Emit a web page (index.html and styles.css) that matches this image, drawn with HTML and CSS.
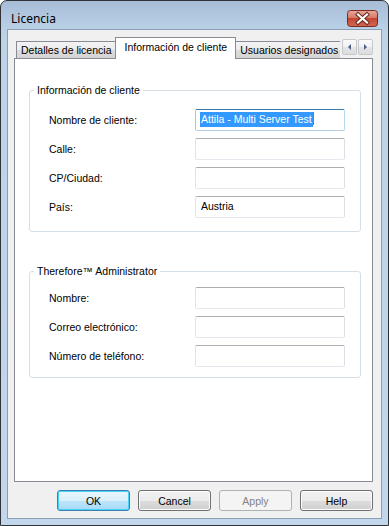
FILE: index.html
```html
<!DOCTYPE html>
<html lang="es">
<head>
    <meta charset="UTF-8">
    <title>Licencia</title>
    <link rel="stylesheet" href="styles.css">
</head>
<body>
    <div class="window">
        <div class="titlebar">
            <span class="title">Licencia</span>
            <svg class="close" width="31" height="17" viewBox="0 0 31 17">
                <defs>
                    <linearGradient id="red" x1="0" y1="0" x2="0" y2="1">
                        <stop offset="0" stop-color="#eaa99a"/>
                        <stop offset="0.45" stop-color="#d77a69"/>
                        <stop offset="0.5" stop-color="#c44531"/>
                        <stop offset="1" stop-color="#cf6a54"/>
                    </linearGradient>
                </defs>
                <rect x="0.5" y="0.5" width="30" height="16" rx="3" fill="url(#red)" stroke="#7a2a20"/>
                <path d="M11 4.5 L20 12.5 M20 4.5 L11 12.5" stroke="#6b2a22" stroke-width="4.2" stroke-linecap="square"/>
                <path d="M11 4.5 L20 12.5 M20 4.5 L11 12.5" stroke="#fff" stroke-width="2.2" stroke-linecap="square"/>
            </svg>
        </div>
        <div class="client">
            <div class="tabstrip">
                <div class="tabs">
                    <div class="tab">Detalles de licencia</div>
                    <div class="tab selected">Información de cliente</div>
                    <div class="tab">Usuarios designados</div>
                </div>
                <div class="spin">
                    <div class="spin_btn"><span class="arrow left"></span></div>
                    <div class="spin_btn"><span class="arrow right"></span></div>
                </div>
            </div>
            <div class="panel">
                <fieldset class="group first">
                    <legend>Información de cliente</legend>
                    <div class="rows">
                        <label>Nombre de cliente:</label>
                        <div class="field focused"><span class="sel">Attila - Multi Server Test</span><span class="caret"></span></div>
                        <label>Calle:</label>
                        <div class="field"></div>
                        <label>CP/Ciudad:</label>
                        <div class="field"></div>
                        <label>País:</label>
                        <div class="field">Austria</div>
                    </div>
                </fieldset>
                <fieldset class="group second">
                    <legend>Therefore™ Administrator</legend>
                    <div class="rows">
                        <label>Nombre:</label>
                        <div class="field"></div>
                        <label>Correo electrónico:</label>
                        <div class="field"></div>
                        <label>Número de teléfono:</label>
                        <div class="field"></div>
                    </div>
                </fieldset>
            </div>
            <div class="buttons">
                <button class="btn default">OK</button>
                <button class="btn">Cancel</button>
                <button class="btn disabled">Apply</button>
                <button class="btn">Help</button>
            </div>
        </div>
    </div>
</body>
</html>
```

FILE: styles.css
```css
* {margin: 0; padding: 0; box-sizing: border-box;}

body
{
    background: #ffffff;
    font-family: "Liberation Sans", Arial, sans-serif;
    font-size: 10.5px;
    color: #000;
}

.window
{
    width: 389px;
    height: 526px;
    border: 1px solid #2f3338;
    border-radius: 7px 7px 0 0;
    background: linear-gradient(#a7bdd6, #b9cfe6 26px, #bcd3ea 40px, #c2d6ec);
    padding: 0 6px 6px 6px;
    display: flex;
    flex-direction: column;
}

.titlebar
{
    height: 28px;
    padding: 9px 4px 0 4px;
    display: flex;
    align-items: flex-start;
    justify-content: space-between;
}

.title
{
    font-family: "Noto Sans", "Liberation Sans", sans-serif;
    font-size: 12px;
    line-height: 17px;
    color: #000;
}

.close {display: block;}

.client
{
    flex: 1;
    background: #f0f0f0;
    border: 1px solid #8a9fb6;
    padding: 7px 8px 7px 6px;
    display: flex;
    flex-direction: column;
}

/* tabs */
.tabstrip
{
    display: flex;
    height: 22px;
    margin-bottom: -1px;
    position: relative;
    z-index: 1;
}

.tabs
{
    display: flex;
    align-items: flex-end;
    width: 327px;
    padding-left: 2px;
    overflow: hidden;
}

.tab
{
    height: 17px;
    margin-bottom: 1px;
    padding: 0 4px;
    line-height: 16px;
    white-space: nowrap;
    border: 1px solid #898c95;
    border-bottom: none;
    background: linear-gradient(#f3f3f3, #ebebeb 50%, #dddddd 51%, #d4d4d4);
}

.tab + .tab {margin-left: -1px;}

.tab.selected
{
    height: 22px;
    margin-bottom: 0;
    padding: 0 8px;
    line-height: 18px;
    background: #ffffff;
}

.spin
{
    display: flex;
    gap: 1px;
    margin-left: 2px;
    padding-top: 2px;
}

.spin_btn
{
    width: 15px;
    height: 16px;
    border: 1px solid #c7c9cd;
    border-radius: 2px;
    background: linear-gradient(#fbfbfb, #f0f0f0 50%, #e4e4e4 51%, #dedede);
    display: flex;
    align-items: center;
    justify-content: center;
}

.arrow
{
    width: 0;
    height: 0;
    border-top: 3px solid transparent;
    border-bottom: 3px solid transparent;
}

.arrow.left {border-right: 3px solid #4b5f86;}
.arrow.right {border-left: 3px solid #4b5f86;}

.panel
{
    flex: 1;
    background: #ffffff;
    border: 1px solid #898c95;
    padding: 24px 11px 0 14px;
}

/* group boxes */
.group
{
    border: 1px solid #d5dfe5;
    border-radius: 3px;
    padding: 0;
}

.group legend
{
    margin-left: 4px;
    padding: 0 3px;
    line-height: 14px;
}

.group.second {margin-top: 32px;}

.rows
{
    display: grid;
    grid-template-columns: 146px 150px;
    row-gap: 7px;
    align-items: center;
    padding: 12px 0 13px 19px;
}

.group.second .rows {padding: 9px 0 10px 19px;}

.field
{
    height: 22px;
    border: 1px solid;
    border-color: #abadb3 #dbdfe6 #e3e9ef #e2e3ea;
    border-radius: 2px;
    background: #fff;
    padding: 0 5px;
    line-height: 19px;
    white-space: nowrap;
}

.field.focused
{
    border-color: #3d7bad #b7d9ed #b5cfe7 #a4c9e3;
    padding-left: 4px;
}

.sel
{
    background: #3399ff;
    color: #fff;
    padding: 1px 1px 2px 1px;
}

.caret
{
    display: inline-block;
    width: 1px;
    height: 13px;
    background: #c06a1c;
    vertical-align: -2px;
}

/* buttons */
.buttons
{
    display: flex;
    justify-content: flex-end;
    gap: 8px;
    margin-top: 8px;
}

.btn
{
    width: 73px;
    height: 21px;
    font-family: inherit;
    font-size: 10.5px;
    color: #000;
    border: 1px solid #707070;
    border-radius: 3px;
    background: linear-gradient(#f2f2f2, #ebebeb 50%, #dddddd 51%, #cfcfcf);
    box-shadow: inset 0 0 0 1px #fcfcfc;
}

.btn.default
{
    border-color: #3c7fb1;
    box-shadow: inset 0 0 0 1px #48d2f8;
    background: linear-gradient(#eaf6fd, #d9f0fc 50%, #bee6fd 51%, #a7d9f5);
}

.btn.disabled
{
    border-color: #adb2b5;
    background: #f4f4f4;
    color: #838383;
    box-shadow: none;
}
```
